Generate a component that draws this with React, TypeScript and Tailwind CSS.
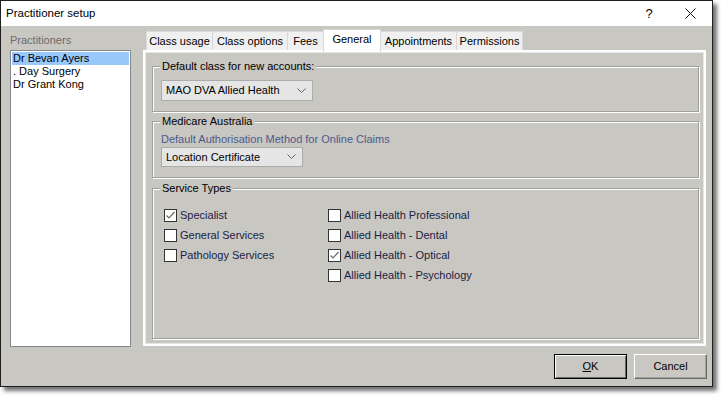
import type { ReactNode } from "react";

const tabs = [
  { label: "Class usage", w: "w-[67px]" },
  { label: "Class options", w: "w-[76px]" },
  { label: "Fees", w: "w-[37px]" },
  { label: "General", w: "w-[58px]", active: true },
  { label: "Appointments", w: "w-[77px]" },
  { label: "Permissions", w: "w-[67px]" },
];

const practitioners = ["Dr Bevan Ayers", ". Day Surgery", "Dr Grant Kong"];

const GroupBox = ({
  title,
  className,
  children,
}: {
  title: string;
  className: string;
  children: ReactNode;
}) => (
  <div
    className={`relative border border-[#a0a09c] shadow-[inset_1px_1px_0_#fff,1px_1px_0_#fff] ${className}`}
  >
    <span className="absolute -top-[8px] left-[7px] bg-[#c8c7c2] px-[2px] leading-[14px] text-black">
      {title}
    </span>
    {children}
  </div>
);

const Combo = ({ value, className }: { value: string; className: string }) => (
  <div
    className={`flex items-center justify-between border border-[#acacac] bg-[#e5e5e5] pl-[4px] pr-[6px] text-black ${className}`}
  >
    <span>{value}</span>
    <svg width="9" height="6" viewBox="0 0 9 6" className="text-[#606060]">
      <path d="M0.5 0.5 L4.5 4.5 L8.5 0.5" fill="none" stroke="currentColor" strokeWidth="1" />
    </svg>
  </div>
);

const Check = ({ label, checked }: { label: string; checked?: boolean }) => (
  <div className="flex h-[20px] items-center gap-[3px]">
    <div className="flex h-[13px] w-[13px] items-center justify-center border border-[#333333] bg-white">
      {checked && (
        <svg width="11" height="11" viewBox="0 0 11 11">
          <path d="M1.5 5.5 L4 8 L9.5 2" fill="none" stroke="#6a6a6a" strokeWidth="1.2" />
        </svg>
      )}
    </div>
    <span className="text-[#1c1c44]">{label}</span>
  </div>
);

const App = () => {
  return (
    <div className="min-h-screen bg-white font-['Liberation_Sans',Arial,sans-serif] text-[11px]">
      <div className="flex h-[387px] w-[713px] flex-col border border-[#1e1e1e] shadow-[4px_4px_4px_rgba(0,0,0,0.55)]">
        {/* title bar */}
        <div className="flex h-[25px] items-center bg-white pl-[5px] text-[11.5px] text-black">
          <span className="flex-1">Practitioner setup</span>
          <span className="w-[20px] text-center text-[13px]">?</span>
          <div className="ml-[25px] mr-[16px] flex w-[12px] justify-center">
            <svg width="11" height="11" viewBox="0 0 11 11">
              <path d="M0.5 0.5 L10.5 10.5 M10.5 0.5 L0.5 10.5" stroke="#111" strokeWidth="1" />
            </svg>
          </div>
        </div>

        <div className="flex flex-1 flex-col bg-[#c8c7c2]">
          <div className="flex pt-[5px]">
            {/* practitioners */}
            <div className="ml-[9px] flex w-[121px] flex-col">
              <span className="mt-[3px] leading-[13px] text-[#6b6b6b]">Practitioners</span>
              <div className="mt-[3px] h-[297px] border border-[#828790] bg-white pt-[1px]">
                {practitioners.map((p, i) => (
                  <div
                    key={p}
                    className={`mx-[1px] h-[13px] pl-[1px] leading-[13px] text-black ${
                      i === 0 ? "bg-[#99c9fb]" : ""
                    }`}
                  >
                    {p}
                  </div>
                ))}
              </div>
            </div>

            {/* tab control */}
            <div className="ml-[12px] flex w-[563px] flex-col">
              <div className="flex h-[19px] items-end pl-[3px]">
                {tabs.map((t, i) => (
                  <div
                    key={t.label}
                    className={`${t.w} ${i > 0 ? "-ml-px" : ""} flex items-center justify-center border-x border-t border-[#d9d9d9] text-black ${
                      t.active
                        ? "relative z-10 -mb-[2px] h-[23px] bg-white pb-[3px]"
                        : "h-[19px] bg-[#f0f0f0]"
                    }`}
                  >
                    {t.label}
                  </div>
                ))}
              </div>
              <div className="flex h-[296px] flex-col border-2 border-white pl-[7px] pr-[5px] shadow-[inset_1px_1px_0_#e6e6e6,inset_-1px_-1px_0_#e6e6e6]">
                <GroupBox title="Default class for new accounts:" className="mt-[14px] h-[46px] pl-[8px] pt-[13px]">
                  <Combo value="MAO DVA Allied Health" className="h-[21px] w-[152px]" />
                </GroupBox>
                <GroupBox title="Medicare Australia" className="mt-[9px] h-[57px] pl-[8px] pt-[11px]">
                  <div className="leading-[13px] text-[#4b5a8c]">
                    Default Authorisation Method for Online Claims
                  </div>
                  <Combo value="Location Certificate" className="mt-[1px] h-[20px] w-[142px]" />
                </GroupBox>
                <GroupBox title="Service Types" className="mt-[10px] flex h-[151px] pl-[11px] pt-[16px]">
                  <div className="flex w-[164px] flex-col">
                    <Check label="Specialist" checked />
                    <Check label="General Services" />
                    <Check label="Pathology Services" />
                  </div>
                  <div className="flex flex-col">
                    <Check label="Allied Health Professional" />
                    <Check label="Allied Health - Dental" />
                    <Check label="Allied Health - Optical" checked />
                    <Check label="Allied Health - Psychology" />
                  </div>
                </GroupBox>
              </div>
            </div>
          </div>

          {/* buttons */}
          <div className="mt-[7px] flex justify-end gap-[7px] pr-[5px]">
            <button className="h-[25px] w-[73px] border border-black bg-[#c8c7c2] text-black shadow-[inset_1px_1px_0_#fff,inset_-1px_-1px_0_#6b6b6b]">
              <span className="underline">O</span>K
            </button>
            <button className="h-[25px] w-[73px] border border-b-[#6b6b6b] border-l-white border-r-[#6b6b6b] border-t-white bg-[#c8c7c2] text-black shadow-[inset_-1px_-1px_0_#a0a0a0]">
              Cancel
            </button>
          </div>
        </div>
      </div>
    </div>
  );
};

export default App;
